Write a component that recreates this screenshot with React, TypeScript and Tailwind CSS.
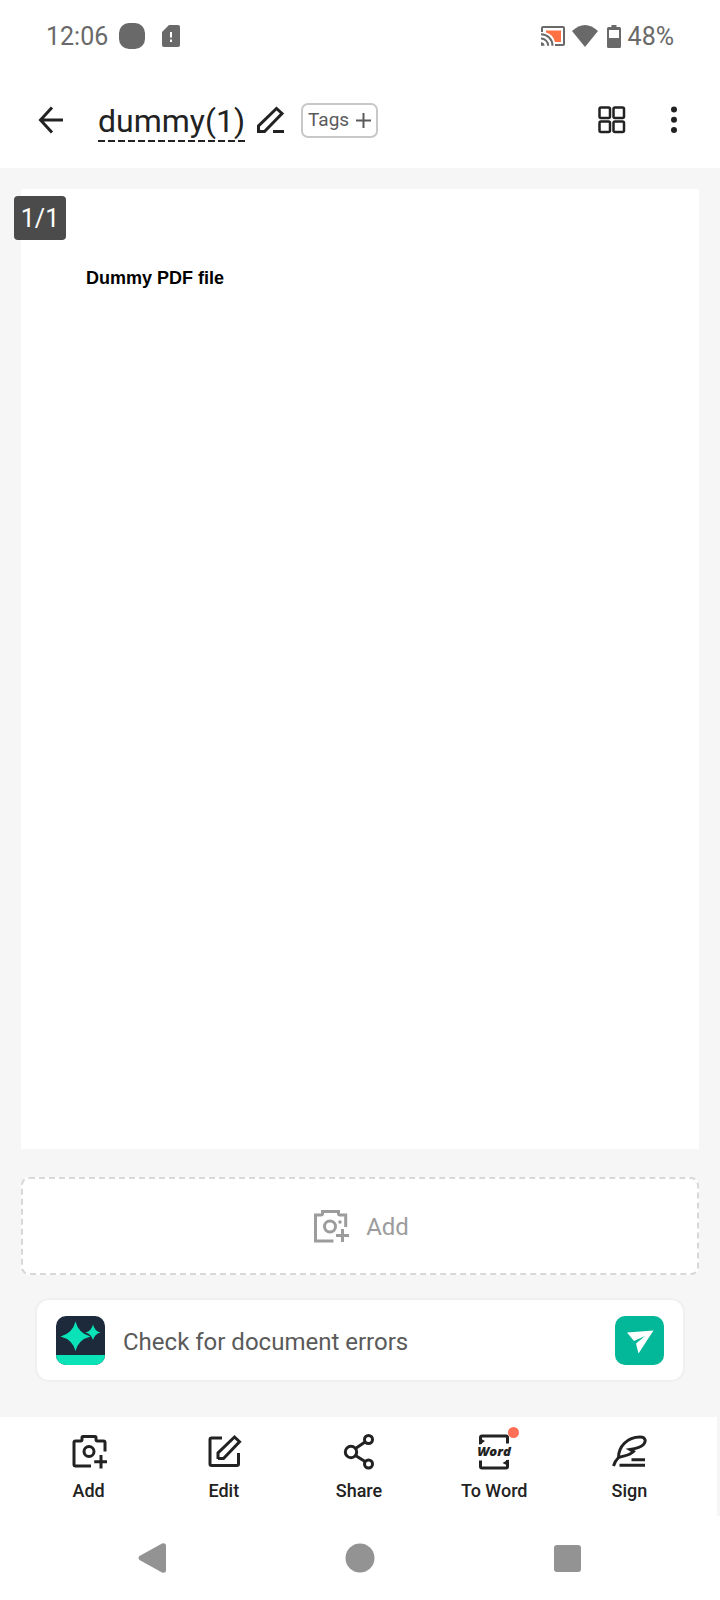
import type { ReactNode } from 'react'

function CameraAddIcon() {
  return (
    <svg width="36" height="36" viewBox="0 0 36 36" fill="none" stroke="currentColor" strokeWidth="3">
      <path d="M20 32H4.500Q3 32 3 30.500V8.500Q3 7 4.500 7H9.500Q11 7 11 5.500V3.500Q11 2.500 12 2.500H24Q25 2.500 25 3.500V5.500Q25 7 26.500 7H32.500Q34 7 34 8.500V17.500" />
      <circle cx="18" cy="17.500" r="5" />
      <path d="M30 21V34.500M23.200 27.700H37" />
    </svg>
  )
}

function EditIcon() {
  return (
    <svg width="36" height="36" viewBox="0 0 36 36" fill="none" stroke="currentColor" strokeWidth="3">
      <path d="M16 4H5.500Q4 4 4 5.500V30Q4 31.500 5.500 31.500H31Q32.500 31.500 32.500 30V19" />
      <path d="M12 25V19L28.500 3L33.500 7.700L17.500 24.500H12" />
    </svg>
  )
}

function ShareIcon() {
  return (
    <svg width="36" height="36" viewBox="0 0 36 36" fill="none" stroke="currentColor" strokeWidth="3">
      <circle cx="10" cy="18" r="5.700" />
      <circle cx="27.500" cy="5.500" r="4" />
      <circle cx="27.500" cy="30" r="4" />
      <path d="M14.500 14.500L24 8M14.500 21.500L24 27.500" />
    </svg>
  )
}

function WordIcon() {
  return (
    <svg width="36" height="36" viewBox="0 0 36 36" className="overflow-visible">
      <g fill="none" stroke="currentColor" strokeWidth="3">
        <path d="M4.500 10V3.500Q4.500 2 6 2H30Q31.500 2 31.500 3.500V9.500" />
        <path d="M4.500 26.500V32.500Q4.500 34 6 34H30Q31.500 34 31.500 32.500V26" />
      </g>
      <path d="M3.500 11V4L9 7ZM32.500 25.500V32L26.500 29Z" fill="currentColor" />
      <text
        x="18"
        y="22"
        textAnchor="middle"
        fill="currentColor"
        className="font-['Open_Sans',sans-serif] text-[13px] font-extrabold italic"
      >
        Word
      </text>
    </svg>
  )
}

function SignIcon() {
  return (
    <svg width="36" height="36" viewBox="0 0 36 36" fill="none" stroke="currentColor" strokeWidth="3">
      <path d="M2.500 32Q4 27 7.500 23.500C7.500 13 16 3 29 3C34.500 3 35.500 7 32.500 10.500C29.500 13.500 25 14.500 19 15.500L22.500 17.500C18 22 13 21.500 7.500 23.500" />
      <path d="M20.500 25.700H34M8.500 31.300H34" />
    </svg>
  )
}

const tools: { label: string; icon: ReactNode; dot?: boolean }[] = [
  { label: 'Add', icon: <CameraAddIcon /> },
  { label: 'Edit', icon: <EditIcon /> },
  { label: 'Share', icon: <ShareIcon /> },
  { label: 'To Word', icon: <WordIcon />, dot: true },
  { label: 'Sign', icon: <SignIcon /> },
]

function StatusBar() {
  return (
    <div className="flex h-[72px] items-center justify-between px-[46px] text-[25px] text-[#696969]">
      <div className="flex items-center">
        <span className="pt-[2px]">12:06</span>
        <span className="ml-[11px] size-[26px] rounded-[10px] bg-[#696969]" />
        <svg width="18" height="22" viewBox="0 0 18 22" className="ml-[17px]">
          <path d="M7 0H16Q18 0 18 2V20Q18 22 16 22H2Q0 22 0 20V7Z" fill="currentColor" />
          <path d="M9 7V12.500M9 14.500V17" stroke="#fff" strokeWidth="2" />
        </svg>
      </div>
      <div className="flex items-center">
        <svg width="24" height="20" viewBox="0 0 24 20" fill="none">
          <path d="M5 4.500H20V16H14Q12 8 5 6.500Z" fill="#ff7043" />
          <g stroke="currentColor" strokeWidth="2">
            <path d="M1 6V2Q1 1 2 1H22Q23 1 23 2V18Q23 19 22 19H14" />
            <path d="M0 8.200A11.500 11.500 0 0 1 11.500 19.700M0 12.500A7.200 7.200 0 0 1 7.200 19.700" />
          </g>
          <path d="M0 16.200A3.500 3.500 0 0 1 3.500 19.700H0Z" fill="currentColor" />
        </svg>
        <svg width="26" height="22" viewBox="0 0 26 22" className="ml-[7px]">
          <path d="M0 6Q13 -6 26 6L13 22Z" fill="currentColor" />
        </svg>
        <svg width="14" height="23" viewBox="0 0 14 23" className="ml-[9px]">
          <path
            fillRule="evenodd"
            d="M4.500 0H9.500V2H12.500Q14 2 14 3.500V21.500Q14 23 12.500 23H1.500Q0 23 0 21.500V3.500Q0 2 1.500 2H4.500ZM2 5V13H12V5Z"
            fill="currentColor"
          />
        </svg>
        <span className="ml-[7px] pt-[2px]">48%</span>
      </div>
    </div>
  )
}

function Header() {
  return (
    <header className="flex h-24 items-center justify-between pr-[41px] pl-[38px] text-[#222]">
      <div className="flex items-center">
        <button type="button" aria-label="Back">
          <svg width="26" height="28" viewBox="0 0 26 28" fill="none" stroke="currentColor" strokeWidth="3">
            <path d="M14 1.500L2.500 14L14 26.500M2 14H25" />
          </svg>
        </button>
        <h1 className="mt-[4px] ml-[34px] bg-[repeating-linear-gradient(90deg,#222_0_7px,transparent_7px_10px)] bg-[length:100%_2px] bg-bottom bg-no-repeat pb-[3px] text-[32px] leading-[36px]">
          dummy(1)
        </h1>
        <button type="button" aria-label="Rename" className="ml-[11px]">
          <svg width="30" height="28" viewBox="0 0 30 28" fill="none" stroke="currentColor" strokeWidth="3">
            <path d="M2.500 25.500V20L20.500 2.500L26 7.500L8.500 25.500Z" />
            <path d="M17 25.500H28" />
          </svg>
        </button>
        <button
          type="button"
          className="ml-[15px] flex h-[35px] items-center gap-[7px] rounded-[7px] border-2 border-[#c8c8c8] px-[5px] text-[19px] text-[#5a5a5a]"
        >
          Tags
          <svg width="15" height="15" viewBox="0 0 15 15" stroke="currentColor" strokeWidth="2">
            <path d="M7.500 0V15M0 7.500H15" />
          </svg>
        </button>
      </div>
      <div className="flex items-center gap-[43px]">
        <button type="button" aria-label="Grid view">
          <svg width="28" height="28" viewBox="0 0 28 28" fill="none" stroke="currentColor" strokeWidth="2.500">
            <rect x="1.500" y="1.500" width="10.500" height="10.500" rx="1.500" />
            <rect x="15.500" y="1.500" width="10.500" height="10.500" rx="1.500" />
            <rect x="1.500" y="15.500" width="10.500" height="10.500" rx="1.500" />
            <rect x="15.500" y="15.500" width="10.500" height="10.500" rx="1.500" />
          </svg>
        </button>
        <button type="button" aria-label="More">
          <svg width="10" height="28" viewBox="0 0 10 28" fill="currentColor">
            <circle cx="5" cy="3.500" r="3" />
            <circle cx="5" cy="13.700" r="3" />
            <circle cx="5" cy="24" r="3" />
          </svg>
        </button>
      </div>
    </header>
  )
}

export default function App() {
  return (
    <div className="flex min-h-screen flex-col bg-white font-[Roboto,sans-serif]">
      <StatusBar />
      <Header />

      <main className="flex-1 bg-[#f6f6f6] px-[21px] pt-[21px] pb-[35px]">
        <div className="relative aspect-[678/960] bg-white pt-[79px] pl-[65px]">
          <span className="absolute top-[7px] -left-[7px] flex h-[44px] w-[52px] items-center justify-center rounded-[4px] bg-[#4b4b4b] pt-[2px] text-[25px] text-white">
            1/1
          </span>
          <p className="font-['Liberation_Sans',Arial,sans-serif] text-[18px] leading-[20px] font-bold text-black">
            Dummy PDF file
          </p>
        </div>

        <button
          type="button"
          className="mt-[28px] flex h-[98px] w-full items-center justify-center gap-[17px] rounded-[8px] border-2 border-dashed border-[#d8d8d8] bg-white pt-[2px] pl-[2px] text-[24px] text-[#9c9c9c]"
        >
          <svg width="36" height="36" viewBox="0 0 36 36" fill="none" stroke="currentColor" strokeWidth="3">
            <path d="M20.500 32H2.500V6H8Q9.500 6 9.500 4.500V2.500H25.500V4.500Q25.500 6 27 6H32.700V18" />
            <circle cx="17" cy="17.500" r="5.500" />
            <circle cx="27" cy="13" r="1.800" fill="currentColor" stroke="none" />
            <path d="M29.500 20V33M23 26.500H36" />
          </svg>
          Add
        </button>

        <div className="mx-[14px] mt-[23px] flex h-[84px] items-center rounded-[14px] border-2 border-[#f0f0f0] bg-white px-[19px]">
          <svg width="49" height="49" viewBox="0 0 49 49" className="rounded-[10px]">
            <rect width="49" height="49" fill="#1c2a3c" />
            <rect y="39" width="49" height="10" fill="#0ae3b8" />
            <path d="M19.500 5.500Q22.500 17.500 34.500 20.500Q22.500 23.500 19.500 35Q16.500 23.500 4.500 20.500Q16.500 17.500 19.500 5.500Z" fill="#0ae3b8" />
            <path
              d="M37 8.500Q38.500 15 44.500 16.500Q38.500 18 37 24Q35.500 18 29.500 16.500Q35.500 15 37 8.500Z"
              fill="#0ae3b8"
            />
          </svg>
          <span className="ml-[18px] flex-1 pt-[3px] text-[24px] text-[#5a5a5a]">Check for document errors</span>
          <button
            type="button"
            aria-label="Send"
            className="flex size-[49px] items-center justify-center rounded-[10px] bg-[#03b898] text-white"
          >
            <svg width="49" height="49" viewBox="0 0 49 49" fill="currentColor">
              <path d="M12 16.500L38.500 14.500L23.500 37.500L21 27.500L30 20L19 25Z" />
            </svg>
          </button>
        </div>
      </main>

      <div className="bg-[#f6f6f6] pr-[3px]">
        <nav className="grid h-[99px] grid-cols-5 bg-white pr-[20px] pl-[21px] text-[#222]">
          {tools.map((tool) => (
            <button key={tool.label} type="button" className="flex flex-col items-center pt-[17px]">
              <span className="relative">
                {tool.icon}
                {tool.dot && <span className="absolute -top-[7px] -right-[7px] size-[11px] rounded-full bg-[#ff6f55]" />}
              </span>
              <span className="mt-[9px] text-[18px] leading-[24px] font-medium">{tool.label}</span>
            </button>
          ))}
        </nav>
      </div>

      {/* system navigation */}
      <div className="flex h-[84px] items-center justify-center gap-[177px] text-[#939393]">
        <button type="button" aria-label="System back">
          <svg width="30" height="30" viewBox="0 0 30 30" fill="currentColor">
            <path d="M1.500 13L24 .500Q28 -.500 28 3V27Q28 30.500 24 29.500L1.500 17Q-.500 15 1.500 13Z" />
          </svg>
        </button>
        <button type="button" aria-label="Home">
          <svg width="30" height="30" viewBox="0 0 30 30" fill="currentColor">
            <circle cx="15" cy="15" r="14.500" />
          </svg>
        </button>
        <button type="button" aria-label="Recent apps">
          <svg width="30" height="30" viewBox="0 0 30 30" fill="currentColor">
            <rect x="2" y="2" width="27" height="27" rx="3" />
          </svg>
        </button>
      </div>
    </div>
  )
}
